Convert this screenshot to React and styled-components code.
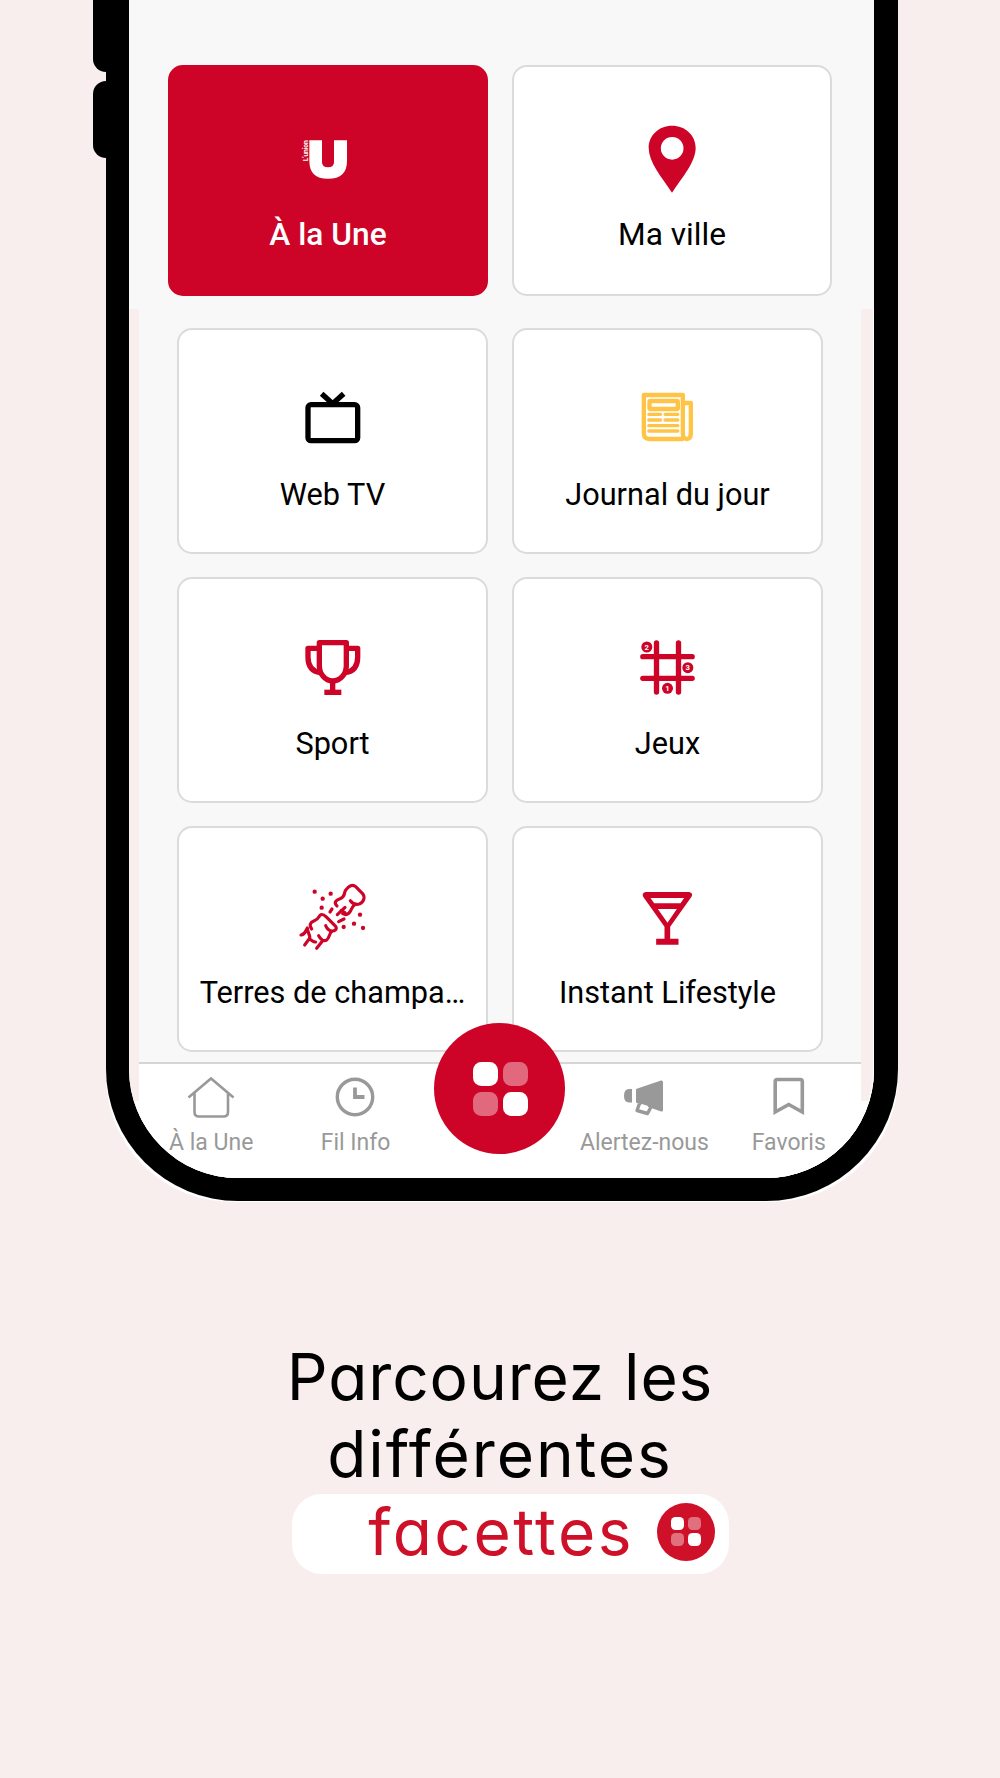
import styled, { createGlobalStyle } from 'styled-components';

const RED = '#cd0427';

export default function App() {
    return (
        <>
            <GlobalStyle />
            <Page>
                <Phone>
                    <SideButton $top="-20px" $height="91.5px" />
                    <SideButton $top="80.5px" $height="77.5px" />
                    <Screen>
                        <Pinned>
                            <Tile $active>
                                <UnionIcon />
                                <TileLabel $size="31.7px">À la Une</TileLabel>
                            </Tile>
                            <Tile>
                                <PinIcon />
                                <TileLabel $size="31.7px">Ma ville</TileLabel>
                            </Tile>
                        </Pinned>
                        <Sections>
                            {sections.map(({ label, Icon }) => (
                                <Tile key={label}>
                                    <Icon />
                                    <TileLabel $size="30.7px">{label}</TileLabel>
                                </Tile>
                            ))}
                        </Sections>
                        <TabBar>
                            <Tab><HomeIcon /><span>À la Une</span></Tab>
                            <Tab><ClockIcon /><span>Fil Info</span></Tab>
                            <Tab>
                                <MenuButton>
                                    <Facets $size={24.5} $gap={5.5} />
                                </MenuButton>
                            </Tab>
                            <Tab><MegaphoneIcon /><span>Alertez-nous</span></Tab>
                            <Tab><BookmarkIcon /><span>Favoris</span></Tab>
                        </TabBar>
                    </Screen>
                </Phone>
                <Headline>
                    <Line $spacing="0.9px">Parcourez les</Line>
                    <Line $spacing="1.9px">différentes</Line>
                    <Pill>
                        <Line $spacing="2.5px">facettes</Line>
                        <Badge>
                            <Facets $size={13} $gap={3.5} />
                        </Badge>
                    </Pill>
                </Headline>
            </Page>
        </>
    );
}

function Facets({ $size, $gap }) {
    return (
        <FacetGrid $size={$size} $gap={$gap}>
            <Facet />
            <Facet $faded />
            <Facet $faded />
            <Facet />
        </FacetGrid>
    );
}

function UnionIcon() {
    return (
        <TileIcon viewBox="645 374 198 198">
            <path fill="#fff" d="M688 417H726V483Q726 498 744 498Q762 498 762 483V417H801V478C801 514 783 532 744 532C706 532 688 514 688 478Z" />
            <text transform="translate(685 480) rotate(-90)" fill="#fff" fontFamily="Roboto, sans-serif" fontWeight="700" fontSize="20" textLength="63">L’union</text>
        </TileIcon>
    );
}

function PinIcon() {
    return (
        <TileIcon viewBox="417 374 198 198">
            <path fill={RED} fillRule="evenodd" d="M516 373C556 373 587 402 587 439C587 483 546 528 516 574C486 528 446 483 446 439C446 402 477 373 516 373ZM516.500 407A34 34 0 1 0 516.500 475A34 34 0 1 0 516.500 407Z" />
        </TileIcon>
    );
}

function TvIcon() {
    return (
        <TileIcon viewBox="90 48 198 198">
            <g fill="none" stroke="#000" strokeWidth="16">
                <rect x="114" y="104" width="149" height="108" rx="9" />
                <path d="M155 71L188 101L221 71" />
            </g>
        </TileIcon>
    );
}

function JournalIcon() {
    return (
        <TileIcon viewBox="104.500 48 198 198">
            <g fill="none" stroke="#ffc445" strokeLinejoin="round">
                <path strokeWidth="13" d="M250 207H148Q131 207 131 190V75H248V190Q248 207 260 207Q272 207 272 190V99H248" />
                <rect x="148" y="93" width="85" height="24" rx="3" strokeWidth="13" />
                <path strokeWidth="10" strokeLinecap="round" d="M146 133H181M195 133H233M146 150H181M195 150H233M146 167H233M146 183H233" />
            </g>
        </TileIcon>
    );
}

function TrophyIcon() {
    return (
        <TileIcon viewBox="90 44 198 198">
            <g fill="none" stroke={RED} strokeWidth="16" strokeLinejoin="round">
                <path d="M148 67H229V136C229 160 212 182 188 182C165 182 148 160 148 136Z" />
                <path d="M148 84H114V111C114 139 128 154 151 157M229 84H263V111C263 139 249 154 226 157" />
                <path d="M188 182V210" />
                <path d="M163 216H214" />
            </g>
        </TileIcon>
    );
}

function GamesIcon() {
    return (
        <TileIcon viewBox="104.500 44 198 198">
            <path fill="none" stroke={RED} strokeWidth="16" strokeLinecap="round" d="M169 68V215M235 68V215M128 109H276M128 174H276" />
            <g fill={RED}>
                <circle cx="140" cy="80" r="16.500" />
                <circle cx="263" cy="142" r="16.500" />
                <circle cx="202" cy="204" r="16.500" />
            </g>
            <g fill="#fff" fontFamily="Roboto, sans-serif" fontWeight="700" fontSize="23" textAnchor="middle">
                <text x="140" y="88">2</text>
                <text x="263" y="150">3</text>
                <text x="202" y="212">1</text>
            </g>
        </TileIcon>
    );
}

function ChampagneIcon() {
    return (
        <TileIcon viewBox="90 42 198 198">
            <g fill="none" stroke={RED} strokeWidth="9.500" strokeLinecap="round" strokeLinejoin="round">
                {/* upper bottle */}
                <path d="M201 108C191 98 196 91 210 86C226 80 221 73 226 62C236 47 248 42 257 50L277 70C287 82 281 97 268 102C257 105 248 101 241 92" />
                <path d="M256 103C246 108 246 115 241 124C236 133 228 136 218 131" />
                <path d="M225 112L202 134M213 122L225 128" />
                <path d="M186 117L180 126M206 155L222 147" />
                {/* lower bottle and its neck */}
                <path d="M125 177C117 165 120 157 133 152C149 146 145 138 153 134C160 131 165 137 171 143L197 169C202 177 195 184 184 183C175 181 170 174 167 167" />
                <path d="M185 184C175 194 180 203 169 211C158 215 151 206 146 197" />
                <path d="M158 212L140 235M137 216C130 216 124 211 118 206L104 225M118 206C124 198 112 190 112 174M93 195C105 194 105 186 112 174" />
            </g>
            <g fill={RED}>
                <circle cx="134" cy="65" r="6.500" />
                <circle cx="158" cy="86" r="6.500" />
                <circle cx="182" cy="71" r="6.500" />
                <circle cx="155" cy="113" r="6.500" />
                <circle cx="270" cy="134" r="6.500" />
                <circle cx="252" cy="161" r="6.500" />
                <circle cx="221" cy="171" r="6.500" />
                <circle cx="279" cy="174" r="6.500" />
            </g>
        </TileIcon>
    );
}

function CocktailIcon() {
    return (
        <TileIcon viewBox="104.500 42 198 198">
            <path fill={RED} fillRule="evenodd" d="M136 66H267Q280 69 274 80L210 170V206H235V224H168V206H193V170L129 80Q124 69 136 66ZM151 84L162 100H241L252 84ZM173 117L202 158L230 117Z" />
        </TileIcon>
    );
}

function HomeIcon() {
    return (
        <TabIcon viewBox="0 0 48 42">
            <g fill="none" stroke="#999" strokeWidth="2.600">
                <path d="M1.500 21.500L24 2.500L46.500 21.500" />
                <path d="M7.500 17V36Q7.500 40.500 12 40.500H36.500Q41 40.500 41 36V17" />
            </g>
        </TabIcon>
    );
}

function ClockIcon() {
    return (
        <TabIcon viewBox="0 0 48 42">
            <circle cx="23" cy="21" r="17.700" fill="none" stroke="#999" strokeWidth="3.400" />
            <path d="M23 11.500V21H32.500" fill="none" stroke="#999" strokeWidth="3.800" />
        </TabIcon>
    );
}

function MegaphoneIcon() {
    return (
        <TabIcon viewBox="0 0 48 42">
            <path fill="#999" d="M12 13V26.500H9Q4 26 4 20Q4 13 9 13ZM16 13L41 4.500Q43 4 43 6.500V34Q43 36 41 35.500L16 26.500Z" />
            <path d="M19.500 27.500L17 34.500L27.500 37.500L31 31" fill="none" stroke="#999" strokeWidth="3.400" strokeLinejoin="round" />
            <path d="M21.500 29.500L27.500 31.500" fill="none" stroke="#fff" strokeWidth="3" />
        </TabIcon>
    );
}

function BookmarkIcon() {
    return (
        <TabIcon viewBox="0 0 48 42">
            <path d="M10.200 36V5.500Q10.200 3.500 12.200 3.500H35.300Q37.300 3.500 37.300 5.500V36L23.750 28.500Z" fill="none" stroke="#999" strokeWidth="3.600" />
        </TabIcon>
    );
}

const sections = [
    { label: 'Web TV', Icon: TvIcon },
    { label: 'Journal du jour', Icon: JournalIcon },
    { label: 'Sport', Icon: TrophyIcon },
    { label: 'Jeux', Icon: GamesIcon },
    { label: 'Terres de champa…', Icon: ChampagneIcon },
    { label: 'Instant Lifestyle', Icon: CocktailIcon },
];

const GlobalStyle = createGlobalStyle`
    * {
        box-sizing: border-box;
    }
    body {
        margin: 0;
        background: #f9eeee;
    }
`;

const Page = styled.main`
    position: relative;
    z-index: 0;
    width: 1000px;
    height: 1778px;
    overflow: hidden;
    background: #f9eeee;
    font-family: Roboto, sans-serif;
`;

const Phone = styled.div`
    position: relative;
    width: 792px;
    height: 1201px;
    margin-left: 106px;
    border: solid #000;
    border-width: 0 24px 23px 23px;
    border-radius: 0 0 132px 132px;
    /* light rim that shows behind the bottom corners */
    &::before {
        content: '';
        position: absolute;
        z-index: -1;
        left: -23px;
        right: -24px;
        bottom: -24px;
        height: 240px;
        border-radius: 0 0 126px 126px;
        background: #fff;
    }
`;

const SideButton = styled.div`
    position: absolute;
    left: -36px;
    top: ${({ $top }) => $top};
    width: 14px;
    height: ${({ $height }) => $height};
    border-radius: 13px 0 0 13px;
    background: #000;
`;

const Screen = styled.div`
    display: flex;
    flex-direction: column;
    height: 1178px;
    overflow: hidden;
    border-radius: 0 0 108px 109px;
    background: linear-gradient(#f9eeee 1101px, #fff 1101px);
    box-shadow: inset -1px 0 #fff;
`;

const Pinned = styled.section`
    display: grid;
    grid-template-columns: 320px 320px;
    grid-template-rows: 230.500px;
    gap: 24px;
    height: 309px;
    padding: 65.400px 0 0 39px;
    background: #f8f8f8;
`;

const Sections = styled.section`
    display: grid;
    grid-template-columns: 311px 311px;
    grid-auto-rows: 225.500px;
    column-gap: 24px;
    row-gap: 23.500px;
    height: 753px;
    margin: 0 13px 0 10px;
    padding: 19px 0 0 38px;
    background: #f8f8f8;
`;

const Tile = styled.div`
    display: flex;
    flex-direction: column;
    align-items: center;
    justify-content: center;
    gap: 17px;
    padding-top: 26px;
    border: 2px solid ${({ $active }) => ($active ? RED : '#dbdbdb')};
    border-radius: 15px;
    background: ${({ $active }) => ($active ? RED : '#fff')};
    color: ${({ $active }) => ($active ? '#fff' : '#000')};
    font-weight: ${({ $active }) => ($active ? 500 : 400)};
`;

const TileIcon = styled.svg`
    display: block;
    width: 66px;
    height: 66px;
    overflow: visible;
`;

const TileLabel = styled.span`
    font-size: ${({ $size }) => $size};
    line-height: 52px;
    white-space: nowrap;
`;

const TabBar = styled.nav`
    display: grid;
    grid-template-columns: repeat(5, 1fr);
    height: 116px;
    margin: 0 13px 0 10px;
    border-top: 2px solid #d6d6d6;
    background: #fff;
`;

const Tab = styled.div`
    position: relative;
    display: flex;
    flex-direction: column;
    align-items: center;
    padding-top: 12px;
    color: #999;
    font-size: 23px;
    white-space: nowrap;
    span {
        margin-top: 12px;
        line-height: 26px;
    }
`;

const TabIcon = styled.svg`
    display: block;
    width: 48px;
    height: 42px;
    flex: none;
`;

const MenuButton = styled.div`
    position: absolute;
    top: -41px;
    display: flex;
    align-items: center;
    justify-content: center;
    width: 131px;
    height: 131px;
    padding: 1px 0 0 1px;
    border-radius: 50%;
    background: ${RED};
`;

const FacetGrid = styled.div`
    display: grid;
    grid-template-columns: repeat(2, ${({ $size }) => $size}px);
    grid-auto-rows: ${({ $size }) => $size}px;
    gap: ${({ $gap }) => $gap}px;
`;

const Facet = styled.i`
    border-radius: 34%;
    background: ${({ $faded }) => ($faded ? 'rgba(255, 255, 255, 0.4)' : '#fff')};
`;

const Headline = styled.h1`
    display: flex;
    flex-direction: column;
    align-items: center;
    margin: 137px 0 0;
    font-weight: 400;
`;

const Line = styled.span`
    font-family: Inter, sans-serif;
    font-size: 64px;
    line-height: 77px;
    letter-spacing: ${({ $spacing }) => $spacing};
    font-feature-settings: 'cv11';
    white-space: nowrap;
`;

const Pill = styled.div`
    display: flex;
    align-items: center;
    justify-content: flex-end;
    gap: 23px;
    width: 437px;
    height: 80px;
    margin: 2px 0 0 21px;
    padding: 0 14px 5px 0;
    border-radius: 30px;
    background: #fff;
    color: #ce1128;
`;

const Badge = styled.div`
    display: flex;
    align-items: center;
    justify-content: center;
    width: 58px;
    height: 58px;
    border-radius: 50%;
    background: #ce1128;
`;
